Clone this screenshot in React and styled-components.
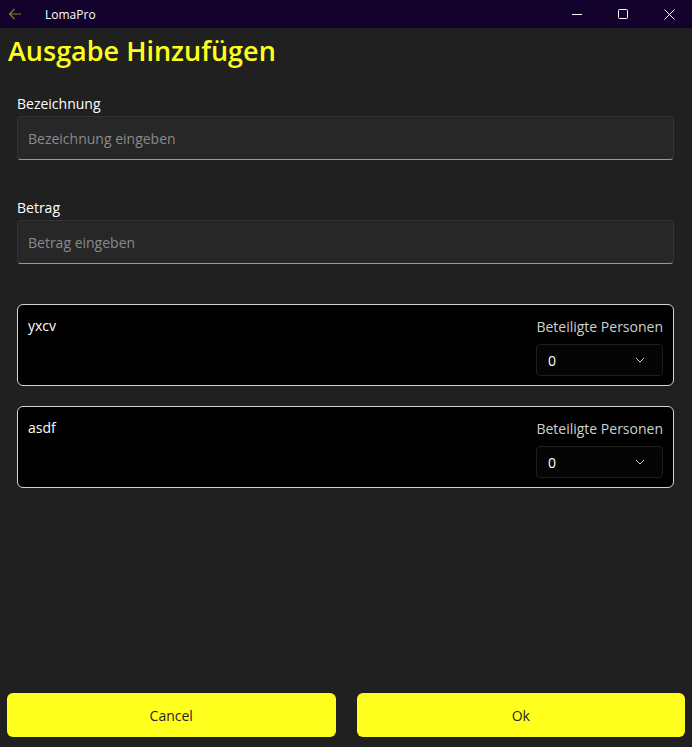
import React from "react";
import styled, { createGlobalStyle } from "styled-components";

const GlobalStyle = createGlobalStyle`
  html, body {
    margin: 0;
    padding: 0;
    background: #202020;
  }
  body {
    font-family: "Open Sans", "Noto Sans", sans-serif;
  }
`;

// Window frame
const Window = styled.div`
  width: 692px;
  height: 747px;
  display: flex;
  flex-direction: column;
  background: #202020;
  overflow: hidden;
`;

const TitleBar = styled.div`
  height: 28px;
  flex: none;
  display: flex;
  align-items: center;
  background: #12012a;
  color: #ffffff;
`;

const BackButton = styled.div`
  width: 30px;
  height: 28px;
  display: flex;
  align-items: center;
  justify-content: center;
`;

const AppName = styled.span`
  margin-left: 15px;
  font-size: 12px;
  color: #ffffff;
`;

const Controls = styled.div`
  margin-left: auto;
  display: flex;
  height: 100%;
`;

const ControlButton = styled.div`
  width: 46px;
  height: 100%;
  display: flex;
  align-items: center;
  justify-content: center;
`;

// Page body
const Content = styled.div`
  flex: 1;
  display: flex;
  flex-direction: column;
  padding: 0 7px 10px 7px;
`;

const Heading = styled.h1`
  margin: 5px 0 0 1px;
  font-size: 27px;
  line-height: 36px;
  font-weight: 600;
  color: #ffff1e;
`;

const Form = styled.div`
  padding: 0 11px 0 10px;
  display: flex;
  flex-direction: column;
`;

const FieldGroup = styled.div`
  display: flex;
  flex-direction: column;
  margin-top: ${(p) => p.$top}px;
`;

const Label = styled.label`
  font-size: 14px;
  line-height: 20px;
  color: #ffffff;
  margin-bottom: 2px;
`;

const TextBox = styled.input`
  box-sizing: border-box;
  height: 44px;
  padding: 0 10px;
  border: 1px solid #333333;
  border-bottom: 1px solid #9a9a9a;
  border-radius: 4px;
  background: #272727;
  color: #ffffff;
  font-family: inherit;
  font-size: 14px;
  outline: none;
  &::placeholder {
    color: #8a8a8a;
  }
`;

const PersonList = styled.div`
  display: flex;
  flex-direction: column;
  gap: 20px;
  margin-top: 40px;
`;

const PersonCard = styled.div`
  box-sizing: border-box;
  height: 82px;
  display: flex;
  justify-content: space-between;
  padding: 11px 10px 0 10px;
  background: #000000;
  border: 1px solid #d4d4d4;
  border-radius: 6px;
`;

const PersonName = styled.span`
  font-size: 14px;
  line-height: 20px;
  color: #ffffff;
`;

const Participants = styled.div`
  display: flex;
  flex-direction: column;
  align-items: flex-end;
`;

const ParticipantsLabel = styled.span`
  font-size: 14px;
  line-height: 20px;
  color: #cfcfcf;
  margin-top: 1px;
`;

const Dropdown = styled.div`
  box-sizing: border-box;
  width: 127px;
  height: 32px;
  margin-top: 7px;
  display: flex;
  align-items: center;
  justify-content: space-between;
  padding: 0 17px 0 11px;
  background: #050505;
  border: 1px solid #1e1e1e;
  border-radius: 4px;
  color: #ffffff;
  font-size: 14px;
`;

const Footer = styled.div`
  margin-top: auto;
  display: flex;
  gap: 21px;
`;

const ActionButton = styled.button`
  flex: 1;
  height: 44px;
  border: none;
  border-radius: 6px;
  background: #ffff1e;
  color: #262626;
  font-family: inherit;
  font-size: 14px;
  cursor: pointer;
`;

const ChevronDown = () => (
  <svg width="10" height="6" viewBox="0 0 10 6">
    <path d="M1 1l4 4 4-4" fill="none" stroke="#cfcfcf" strokeWidth="1" />
  </svg>
);

const people = ["yxcv", "asdf"];

export default function App() {
  return (
    <Window>
      <GlobalStyle />
      <TitleBar>
        <BackButton>
          <svg width="14" height="12" viewBox="0 0 14 12">
            <path d="M13 6H1.5M6.5 1L1.5 6l5 5" fill="none" stroke="#8d7f1e" strokeWidth="1.2" />
          </svg>
        </BackButton>
        <AppName>LomaPro</AppName>
        <Controls>
          <ControlButton>
            <svg width="10" height="10" viewBox="0 0 10 10">
              <path d="M0 5.5h10" stroke="#ffffff" strokeWidth="1" />
            </svg>
          </ControlButton>
          <ControlButton>
            <svg width="10" height="10" viewBox="0 0 10 10">
              <rect x="0.5" y="0.5" width="9" height="9" rx="1" fill="none" stroke="#ffffff" strokeWidth="1" />
            </svg>
          </ControlButton>
          <ControlButton>
            <svg width="11" height="11" viewBox="0 0 11 11">
              <path d="M0.5 0.5l10 10M10.5 0.5l-10 10" stroke="#ffffff" strokeWidth="1" />
            </svg>
          </ControlButton>
        </Controls>
      </TitleBar>
      <Content>
        <Heading>Ausgabe Hinzufügen</Heading>
        <Form>
          <FieldGroup $top={25}>
            <Label>Bezeichnung</Label>
            <TextBox placeholder="Bezeichnung eingeben" />
          </FieldGroup>
          <FieldGroup $top={38}>
            <Label>Betrag</Label>
            <TextBox placeholder="Betrag eingeben" />
          </FieldGroup>
          <PersonList>
            {people.map((name) => (
              <PersonCard key={name}>
                <PersonName>{name}</PersonName>
                <Participants>
                  <ParticipantsLabel>Beteiligte Personen</ParticipantsLabel>
                  <Dropdown>
                    <span>0</span>
                    <ChevronDown />
                  </Dropdown>
                </Participants>
              </PersonCard>
            ))}
          </PersonList>
        </Form>
        <Footer>
          <ActionButton>Cancel</ActionButton>
          <ActionButton>Ok</ActionButton>
        </Footer>
      </Content>
    </Window>
  );
}
